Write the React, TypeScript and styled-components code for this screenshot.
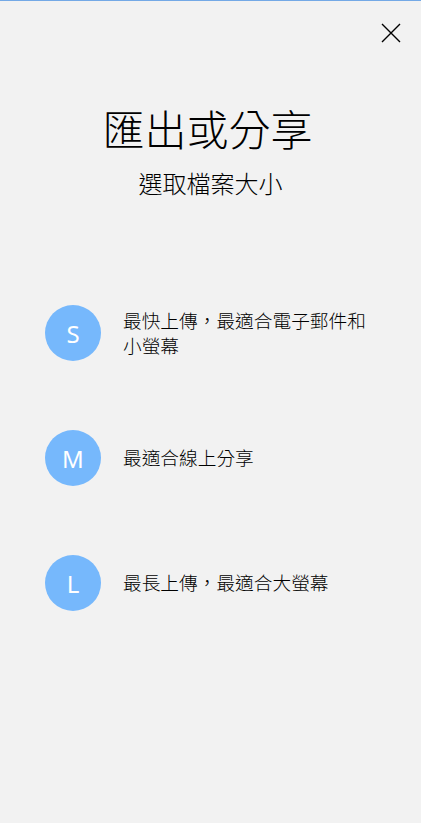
import React from 'react';
import styled, { createGlobalStyle } from 'styled-components';

const GlobalStyle = createGlobalStyle`
  html, body {
    margin: 0;
    padding: 0;
    background: #f2f2f2;
  }
`;

const Page = styled.div`
  min-height: 100vh;
  box-sizing: border-box;
  background: #f2f2f2;
  border-top: 1px solid #74a9e6;
  font-family: "Noto Sans CJK TC", "Noto Sans", sans-serif;
  color: #000;
`;

const Header = styled.div`
  display: flex;
  justify-content: flex-end;
  padding: 22px 20px 0 0;
`;

const CloseButton = styled.button`
  width: 20px;
  height: 20px;
  padding: 0;
  border: none;
  background: transparent;
  cursor: pointer;
  display: flex;
`;

const Title = styled.h1`
  margin: 60px 0 0;
  padding-right: 6px;
  text-align: center;
  font-size: 42px;
  line-height: 50px;
  font-weight: 300;
  color: #000;
`;

const Subtitle = styled.h2`
  margin: 15px 0 0;
  text-align: center;
  font-size: 24px;
  line-height: 30px;
  font-weight: 300;
  color: #000;
`;

const SizeList = styled.ul`
  list-style: none;
  margin: 107px 0 0;
  padding: 0 0 0 45px;
  display: flex;
  flex-direction: column;
  gap: 69px;
`;

const SizeRow = styled.li`
  display: flex;
  align-items: center;
  gap: 22px;
  cursor: pointer;
`;

const Badge = styled.div`
  flex: none;
  width: 56px;
  height: 56px;
  border-radius: 50%;
  background: #76b8fc;
  color: #fff;
  display: flex;
  align-items: center;
  justify-content: center;
  font-family: "Noto Sans", "Open Sans", sans-serif;
  font-size: 24px;
  font-weight: 400;
`;

const Description = styled.div`
  width: 250px;
  margin-top: -3px;
  font-size: 18.7px;
  line-height: 25px;
  font-weight: 300;
  color: #000;
`;

const sizes = [
  { key: 'S', text: '最快上傳，最適合電子郵件和小螢幕' },
  { key: 'M', text: '最適合線上分享' },
  { key: 'L', text: '最長上傳，最適合大螢幕' },
];

export default function App() {
  return (
    <Page>
      <GlobalStyle />
      <Header>
        <CloseButton aria-label="關閉">
          <svg width="20" height="20" viewBox="0 0 20 20">
            <path d="M1 1 L19 19 M19 1 L1 19" stroke="#000" strokeWidth="1.4" fill="none" />
          </svg>
        </CloseButton>
      </Header>
      <Title>匯出或分享</Title>
      <Subtitle>選取檔案大小</Subtitle>
      <SizeList>
        {sizes.map((s) => (
          <SizeRow key={s.key}>
            <Badge>{s.key}</Badge>
            <Description>{s.text}</Description>
          </SizeRow>
        ))}
      </SizeList>
    </Page>
  );
}
